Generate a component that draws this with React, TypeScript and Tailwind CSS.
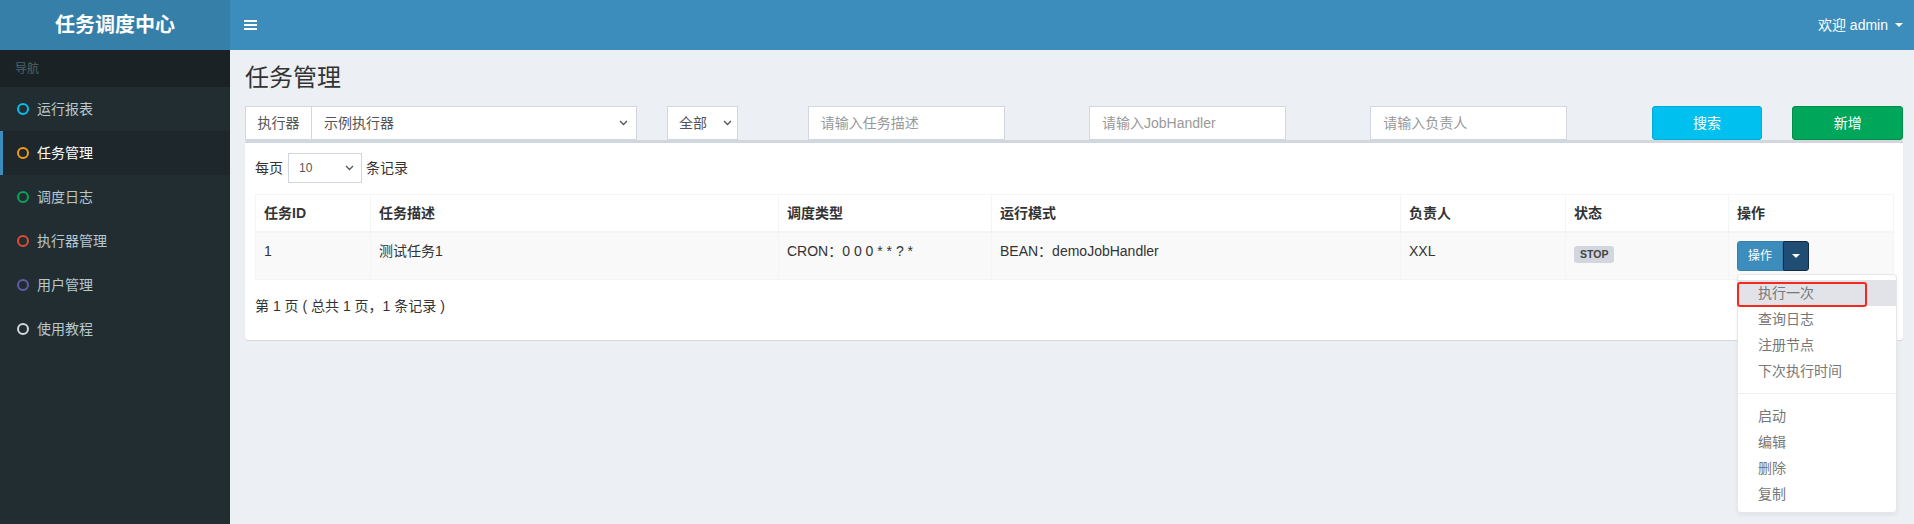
import React from 'react';

const NAV = [
  { label: '运行报表', color: '#00c0ef' },
  { label: '任务管理', color: '#f39c12', active: true },
  { label: '调度日志', color: '#00a65a' },
  { label: '执行器管理', color: '#dd4b39' },
  { label: '用户管理', color: '#605ca8' },
  { label: '使用教程', color: '#d2d6de' },
];

const COLS = [
  { title: '任务ID', cls: 'w-[115px]' },
  { title: '任务描述', cls: 'w-[408px]' },
  { title: '调度类型', cls: 'w-[213px]' },
  { title: '运行模式', cls: 'w-[409px]' },
  { title: '负责人', cls: 'w-[165px]' },
  { title: '状态', cls: 'w-[163px]' },
  { title: '操作', cls: 'w-[165px]' },
];

const MENU_TOP = ['执行一次', '查询日志', '注册节点', '下次执行时间'];
const MENU_BOTTOM = ['启动', '编辑', '删除', '复制'];

function Chevron() {
  return (
    <svg width="9" height="6" viewBox="0 0 9 6" className="shrink-0">
      <path d="M1 1l3.5 3.5L8 1" fill="none" stroke="#555" strokeWidth="1.3" />
    </svg>
  );
}

function Caret({ color = '#fff' }: { color?: string }) {
  return (
    <svg width="8" height="4" viewBox="0 0 8 4" className="shrink-0">
      <path d="M0 0h8L4 4z" fill={color} />
    </svg>
  );
}

function Sidebar() {
  return (
    <aside className="w-[230px] shrink-0 flex flex-col">
      <div className="h-[50px] bg-[#367fa9] flex items-center justify-center text-white text-[20px] font-bold">
        任务调度中心
      </div>
      <div className="flex-1 bg-[#222d32]">
        <div className="h-[37px] bg-[#1a2226] text-[#4b646f] text-[12px] flex items-center pl-[15px]">导航</div>
        {NAV.map((item) => (
          <div
            key={item.label}
            className={`h-[44px] flex items-center text-[14px] ${
              item.active
                ? 'bg-[#1e282c] text-white border-l-[3px] border-[#3c8dbc] pl-[14px]'
                : 'text-[#b8c7ce] pl-[17px]'
            }`}
          >
            <svg width="12" height="12" viewBox="0 0 12 12" className="shrink-0">
              <circle cx="6" cy="6" r="5" fill="none" stroke={item.color} strokeWidth="2" />
            </svg>
            <span className="ml-[8px]">{item.label}</span>
          </div>
        ))}
      </div>
    </aside>
  );
}

function Topbar() {
  return (
    <header className="h-[50px] bg-[#3c8dbc] flex items-center justify-between pl-[14px] pr-[11px] text-white">
      <svg width="13" height="10" viewBox="0 0 13 10">
        <rect x="0" y="0" width="13" height="2" fill="#fff" />
        <rect x="0" y="4" width="13" height="2" fill="#fff" />
        <rect x="0" y="8" width="13" height="2" fill="#fff" />
      </svg>
      <div className="flex items-center gap-[7px] text-[14px]">
        <span>欢迎 admin</span>
        <Caret />
      </div>
    </header>
  );
}

function Filters() {
  const input =
    'h-[34px] w-[197px] border border-[#d2d6de] bg-white px-[12px] flex items-center text-[14px] text-[#999]';
  return (
    <div className="grid grid-cols-12 gap-x-[30px] h-[34px]">
      <div className="col-span-3 flex h-[34px] text-[14px] text-[#555]">
        <div className="w-[67px] shrink-0 border border-[#d2d6de] bg-white flex items-center justify-center">执行器</div>
        <div className="flex-1 border border-l-0 border-[#d2d6de] bg-white flex items-center justify-between pl-[12px] pr-[8px]">
          <span>示例执行器</span>
          <Chevron />
        </div>
      </div>
      <div className="col-span-1">
        <div className="h-[34px] w-[71px] border border-[#d2d6de] bg-white flex items-center justify-between pl-[11px] pr-[5px] text-[14px] text-[#555]">
          <span>全部</span>
          <Chevron />
        </div>
      </div>
      <div className="col-span-2">
        <div className={input}>请输入任务描述</div>
      </div>
      <div className="col-span-2">
        <div className={input}>请输入JobHandler</div>
      </div>
      <div className="col-span-2">
        <div className={input}>请输入负责人</div>
      </div>
      <div className="col-span-1">
        <div className="h-[34px] rounded-[3px] bg-[#00c0ef] border border-[#00acd6] text-white text-[14px] flex items-center justify-center">
          搜索
        </div>
      </div>
      <div className="col-span-1">
        <div className="h-[34px] rounded-[3px] bg-[#00a65a] border border-[#008d4c] text-white text-[14px] flex items-center justify-center">
          新增
        </div>
      </div>
    </div>
  );
}

function ActionMenu() {
  const item = 'h-[26px] flex items-center pl-[20px] text-[14px] text-[#777] whitespace-nowrap';
  return (
    <div className="absolute left-0 top-[33px] z-10 w-[160px] bg-white border border-[#e6e6e6] rounded-[4px] py-[5px] shadow-[0_2px_4px_rgba(0,0,0,0.06)]">
      {MENU_TOP.map((label, i) => (
        <div key={label} className={`${item} ${i === 0 ? 'bg-[#e1e3e9] text-[#333] relative' : ''}`}>
          {label}
          {i === 0 && (
            <div className="absolute -left-[1px] top-[2px] w-[130px] h-[25px] border-2 border-[#f2291c] rounded-[3px]" />
          )}
        </div>
      ))}
      <div className="h-px bg-[#eee] my-[9px]" />
      {MENU_BOTTOM.map((label) => (
        <div key={label} className={item}>
          {label}
        </div>
      ))}
    </div>
  );
}

function JobTable() {
  const cell = 'border border-[#f4f4f4] px-[8px] py-[8px] text-left align-top leading-[20px]';
  return (
    <table className="w-full table-fixed border-collapse mt-[11px] text-[14px] text-[#333]">
      <thead>
        <tr>
          {COLS.map((c) => (
            <th key={c.title} className={`${cell} ${c.cls} border-b-2 font-bold`}>
              {c.title}
            </th>
          ))}
        </tr>
      </thead>
      <tbody>
        <tr className="bg-[#f9f9f9]">
          <td className={cell}>1</td>
          <td className={cell}>测试任务1</td>
          <td className={cell}>CRON：0 0 0 * * ? *</td>
          <td className={cell}>BEAN：demoJobHandler</td>
          <td className={cell}>XXL</td>
          <td className={cell}>
            <div className="pt-[5px]">
              <span className="block w-fit bg-[#d2d6de] text-[#444] text-[10.5px] font-bold leading-none px-[6px] pt-[3px] pb-[3px] rounded-[3px]">
                STOP
              </span>
            </div>
          </td>
          <td className={cell}>
            <div className="relative flex w-fit">
              <div className="h-[30px] px-[10px] bg-[#3c8dbc] border border-[#367fa9] rounded-l-[3px] text-white text-[12px] flex items-center">
                操作
              </div>
              <div className="h-[30px] w-[26px] bg-[#204d74] border border-[#122b40] rounded-r-[3px] flex items-center justify-center">
                <Caret />
              </div>
              <ActionMenu />
            </div>
          </td>
        </tr>
      </tbody>
    </table>
  );
}

export default function App() {
  return (
    <div className="w-[1914px] h-[524px] overflow-hidden flex bg-[#ecf0f5] font-['Liberation_Sans','Noto_Sans_CJK_SC',sans-serif]">
      <Sidebar />
      <div className="flex-1 flex flex-col min-w-0">
        <Topbar />
        <div className="pl-[15px] pr-[11px] pt-[15px]">
          <h1 className="text-[24px] leading-[1.1] text-[#333] font-normal">任务管理</h1>
          <div className="pt-[15px]">
            <Filters />
            <div className="bg-white border-t-[3px] border-[#d2d6de] rounded-[3px] shadow-[0_1px_1px_rgba(0,0,0,0.1)] p-[10px] pb-[24px]">
              <div className="flex items-center text-[14px] text-[#333] h-[30px]">
                <span>每页</span>
                <div className="ml-[5px] mr-[4px] h-[30px] w-[74px] border border-[#d2d6de] flex items-center justify-between pl-[10px] pr-[7px] text-[12px] text-[#555]">
                  <span>10</span>
                  <Chevron />
                </div>
                <span>条记录</span>
              </div>
              <JobTable />
              <div className="mt-[16px] leading-[20px] text-[14px] text-[#333]">第 1 页 ( 总共 1 页，1 条记录 )</div>
            </div>
          </div>
        </div>
      </div>
    </div>
  );
}
